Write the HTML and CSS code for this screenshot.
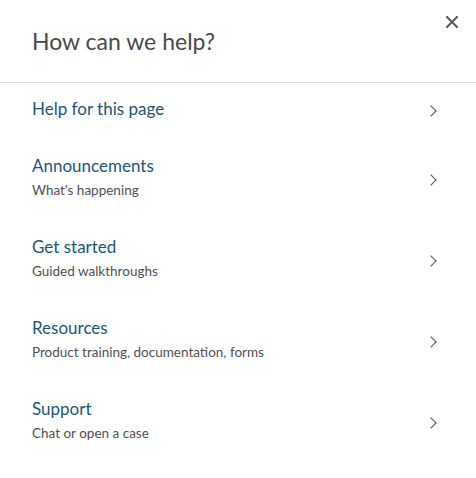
FILE: index.html
```html
<!DOCTYPE html>
<html lang="en">
<head>
    <meta charset="UTF-8">
    <meta name="viewport" content="width=device-width, initial-scale=1.0">
    <title>How can we help?</title>
    <link rel="stylesheet" href="styles.css">
</head>
<body>
    <div class="panel">
        <div class="panel-header">
            <h1>How can we help?</h1>
            <button class="close-btn" aria-label="Close">
                <svg width="12" height="12" viewBox="0 0 12 12">
                    <path d="M1 1 L11 11 M11 1 L1 11" stroke="#5f6068" stroke-width="2.2" stroke-linecap="square"/>
                </svg>
            </button>
        </div>
        <ul class="help-list">
            <li class="help-item single">
                <div class="help-text">
                    <a href="#" class="help-title">Help for this page</a>
                </div>
                <span class="chevron"></span>
            </li>
            <li class="help-item">
                <div class="help-text">
                    <a href="#" class="help-title">Announcements</a>
                    <div class="help-sub">What's happening</div>
                </div>
                <span class="chevron"></span>
            </li>
            <li class="help-item">
                <div class="help-text">
                    <a href="#" class="help-title">Get started</a>
                    <div class="help-sub">Guided walkthroughs</div>
                </div>
                <span class="chevron"></span>
            </li>
            <li class="help-item">
                <div class="help-text">
                    <a href="#" class="help-title">Resources</a>
                    <div class="help-sub">Product training, documentation, forms</div>
                </div>
                <span class="chevron"></span>
            </li>
            <li class="help-item">
                <div class="help-text">
                    <a href="#" class="help-title">Support</a>
                    <div class="help-sub">Chat or open a case</div>
                </div>
                <span class="chevron"></span>
            </li>
        </ul>
    </div>
</body>
</html>
```
FILE: styles.css
```css
body {
    margin: 0;
    padding: 0;
    background-color: #ffffff;
    font-family: "Lato", "Open Sans", sans-serif;
}

.panel {
    width: 476px;
    height: 478px;
    background-color: #ffffff;
}

.panel-header {
    display: flex;
    align-items: center;
    justify-content: space-between;
    height: 83px;
    padding: 0 0 0 32px;
    box-sizing: border-box;
    border-bottom: 1px solid #dddbe0;
}

h1 {
    margin: 0;
    font-size: 23px;
    font-weight: 400;
    color: #4a4a4c;
}

.close-btn {
    align-self: flex-start;
    margin: 16px 18px 0 0;
    padding: 0;
    border: none;
    background: none;
    cursor: pointer;
    line-height: 0;
}

.help-list {
    list-style: none;
    margin: 0;
    padding: 0;
}

.help-item {
    display: flex;
    align-items: center;
    justify-content: space-between;
    padding: 16px 41px 17px 32px;
}

.help-item.single {
    padding-top: 14px;
    padding-bottom: 17px;
}

.help-title {
    display: block;
    font-size: 17px;
    line-height: 24px;
    color: #1d5677;
    text-decoration: none;
}

.help-sub {
    font-size: 13.5px;
    line-height: 24px;
    color: #505052;
}

/* small chevron pointing right */
.chevron {
    width: 7px;
    height: 7px;
    border-top: 1.5px solid #55555a;
    border-right: 1.5px solid #55555a;
    transform: rotate(45deg);
    margin-top: 4px;
}
```
